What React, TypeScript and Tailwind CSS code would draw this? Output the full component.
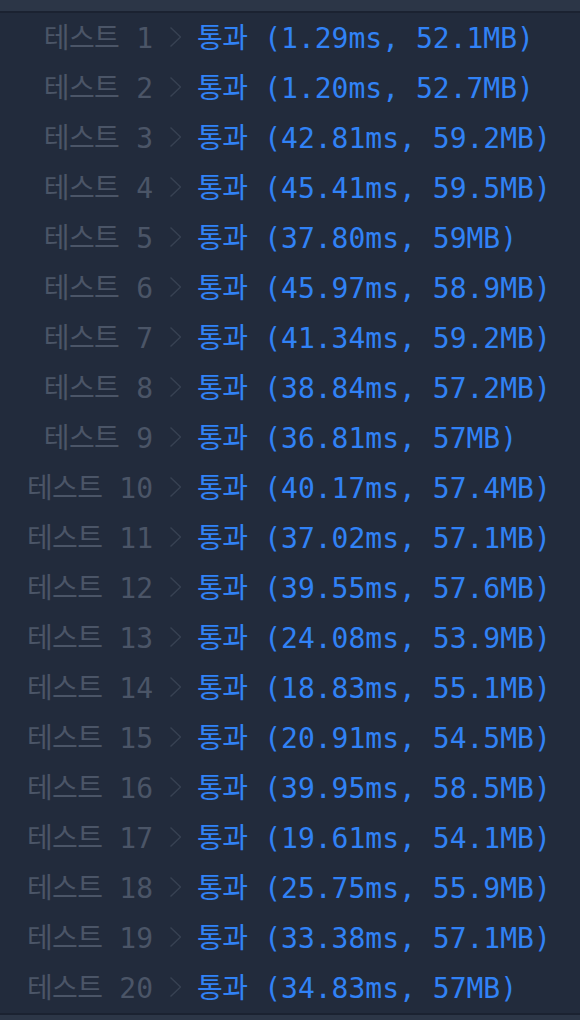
const results: [number, string, string][] = [
  [1, '1.29ms', '52.1MB'],
  [2, '1.20ms', '52.7MB'],
  [3, '42.81ms', '59.2MB'],
  [4, '45.41ms', '59.5MB'],
  [5, '37.80ms', '59MB'],
  [6, '45.97ms', '58.9MB'],
  [7, '41.34ms', '59.2MB'],
  [8, '38.84ms', '57.2MB'],
  [9, '36.81ms', '57MB'],
  [10, '40.17ms', '57.4MB'],
  [11, '37.02ms', '57.1MB'],
  [12, '39.55ms', '57.6MB'],
  [13, '24.08ms', '53.9MB'],
  [14, '18.83ms', '55.1MB'],
  [15, '20.91ms', '54.5MB'],
  [16, '39.95ms', '58.5MB'],
  [17, '19.61ms', '54.1MB'],
  [18, '25.75ms', '55.9MB'],
  [19, '33.38ms', '57.1MB'],
  [20, '34.83ms', '57MB'],
]

const mono = "font-['DejaVu_Sans_Mono','Noto_Sans_CJK_KR',monospace]"
const kr = "font-['Noto_Sans_CJK_KR',sans-serif] text-[28px] tracking-[-0.6px]"

export default function App() {
  return (
    <div className={`w-[580px] h-[1020px] bg-[#222b3c] flex flex-col overflow-hidden ${mono}`}>
      <div className="h-[13px] shrink-0 bg-[#2c3647] border-b-2 border-[#1b2231]" />
      <div className="flex flex-col">
        {results.map(([n, time, mem]) => (
          <div key={n} className="h-[50px] pb-[2px] flex items-center text-[28px] leading-none whitespace-pre">
            <span className="w-[153px] text-right text-[#4b5567]">
              <span className={kr}>테스트</span> {n}
            </span>
            <svg width="11" height="20" viewBox="0 0 11 20" className="ml-[17px] shrink-0">
              <path d="M0.5 0.5 L10.5 10 L0.5 19.5" fill="none" stroke="#384253" strokeWidth="1.4" />
            </svg>
            <span className="ml-[16px] text-[#3182f6]">
              <span className={kr}>통과</span> ({time}, {mem})
            </span>
          </div>
        ))}
      </div>
      <div className="h-[2px] shrink-0 bg-[#1b2231]" />
      <div className="flex-1 bg-[#2c3647]" />
    </div>
  )
}
